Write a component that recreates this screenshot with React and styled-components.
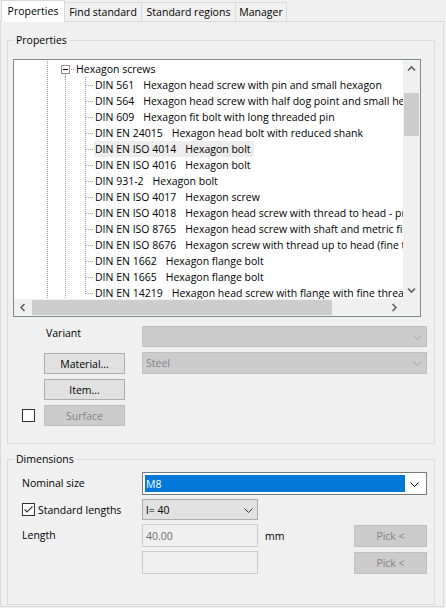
import React from 'react';
import styled, { createGlobalStyle } from 'styled-components';

const FONT = `"Open Sans", "Noto Sans", sans-serif`;
const DOT = '#a0a0a0';

const Global = createGlobalStyle`
  html, body { margin: 0; padding: 0; background: #f0f0f0; }
  body { font-family: ${FONT}; font-size: 10.5px; color: #000; }
  * { box-sizing: border-box; }
`;

const Window = styled.div`
  width: 446px;
  height: 608px;
  overflow: hidden;
  background: #f0f0f0;
  display: flex;
  flex-direction: column;
`;

const TabBar = styled.div`
  display: flex;
  align-items: flex-end;
  height: 21px;
  padding-left: 1px;
  position: relative;
  z-index: 1;
`;

const Tab = styled.div`
  flex: none;
  width: ${p => p.$w}px;
  height: ${p => (p.$active ? 22 : 19)}px;
  margin-bottom: ${p => (p.$active ? -1 : 0)}px;
  background: ${p => (p.$active ? '#ffffff' : '#f0f0f0')};
  border: 1px solid #d9d9d9;
  border-left-width: ${p => (p.$active ? 1 : 0)}px;
  border-bottom: none;
  display: flex;
  align-items: center;
  justify-content: center;
  padding-bottom: ${p => (p.$active ? 2 : 0)}px;
  white-space: nowrap;
`;

const TabPage = styled.div`
  width: 444px;
  height: 586px;
  border: 1px solid #d9d9d9;
  padding: 0 8px 0 6px;
  display: flex;
  flex-direction: column;
`;

const GroupBox = styled.fieldset`
  margin: ${p => p.$mt}px 0 0 0;
  padding: 0;
  min-width: 0;
  width: 428px;
  height: ${p => (p.$h ? `${p.$h}px` : 'auto')};
  border: 1px solid #dcdcdc;
`;

const Legend = styled.legend`
  margin-left: 6px;
  padding: 0 2px;
  line-height: 15px;
  height: 15px;
`;

const PropsBody = styled.div`
  padding: 11px 7px 17px 5px;
  display: flex;
  flex-direction: column;
`;

/* ---------- Tree ---------- */
const TreeBox = styled.div`
  width: 408px;
  height: 258px;
  border: 1px solid #828790;
  background: #fff;
  display: grid;
  grid-template-columns: 389px 17px;
  grid-template-rows: 239px 17px;
`;

const TreeContent = styled.div`
  overflow: hidden;
  padding-top: 1px;
  background: #fff;
`;

const TreeRow = styled.div`
  display: flex;
  height: 16px;
  white-space: nowrap;
`;

const GuideSvg = styled.svg`
  flex: none;
  display: block;
`;

const RowLabel = styled.span`
  display: flex;
  align-items: center;
  height: 16px;
  padding: 0 3px 0 1px;
  background: ${p => (p.$hl ? '#ededed' : 'transparent')};
`;

const Code = styled.span`
  margin-right: 9px;
`;

const VScroll = styled.div`
  background: #f0f0f0;
  display: flex;
  flex-direction: column;
`;

const HScroll = styled.div`
  background: #f0f0f0;
  display: flex;
`;

const Corner = styled.div`
  background: #f0f0f0;
`;

const ArrowBtn = styled.div`
  flex: none;
  width: 17px;
  height: 17px;
  display: flex;
  align-items: center;
  justify-content: center;
`;

const Track = styled.div`
  flex: 1;
  display: flex;
  flex-direction: ${p => (p.$v ? 'column' : 'row')};
`;

const Thumb = styled.div`
  flex: none;
  background: #cdcdcd;
  ${p =>
    p.$v
      ? `margin: ${p.$offset}px 1px 0 1px; height: ${p.$size}px;`
      : `margin: 1px 0 1px ${p.$offset}px; width: ${p.$size}px;`}
`;

/* ---------- Controls ---------- */
const ControlGrid = styled.div`
  margin-top: 9px;
  display: grid;
  grid-template-columns: 31px 81px 17px 1fr;
  grid-template-rows: 21px 22px 21px 21px;
  row-gap: 5px;
  width: 414px;
`;

const FieldLabel = styled.span`
  display: flex;
  align-items: ${p => (p.$top ? 'flex-start' : 'center')};
  line-height: 15px;
  white-space: nowrap;
  padding-left: ${p => p.$pl || 0}px;
  grid-column: ${p => p.$col || 'auto'};
`;

const Button = styled.div`
  display: flex;
  align-items: center;
  justify-content: center;
  height: ${p => p.$h || 21}px;
  align-self: end;
  grid-column: ${p => p.$col || 'auto'};
  background: ${p => (p.$disabled ? '#cccccc' : '#e1e1e1')};
  border: 1px solid ${p => (p.$disabled ? '#bfbfbf' : '#adadad')};
  color: ${p => (p.$disabled ? '#838383' : '#000')};
  white-space: nowrap;
`;

const Combo = styled.div`
  display: flex;
  align-items: center;
  height: 100%;
  grid-column: ${p => p.$col || 'auto'};
  border: 1px solid ${p => p.$border};
  background: ${p => p.$bg};
  color: ${p => p.$color || '#000'};
  padding: ${p => (p.$focused ? '2px' : '0 0 0 2px')};
`;

const ComboText = styled.span`
  flex: 1;
  align-self: stretch;
  display: flex;
  align-items: center;
  padding-left: 1px;
  background: ${p => (p.$sel ? '#0078d7' : 'transparent')};
  color: ${p => (p.$sel ? '#fff' : 'inherit')};
`;

const ComboArrow = styled.span`
  flex: none;
  width: ${p => p.$w || 18}px;
  display: flex;
  align-items: center;
  justify-content: center;
  padding-top: 1px;
`;

const CheckCell = styled.div`
  display: flex;
  align-items: center;
  padding-left: ${p => p.$pl || 0}px;
  gap: 3px;
  white-space: nowrap;
  grid-column: ${p => p.$col || 'auto'};
`;

const CheckBox = styled.span`
  flex: none;
  width: 13px;
  height: 13px;
  border: 1px solid #333;
  background: #fff;
  display: flex;
  align-items: center;
  justify-content: center;
`;

const DimBody = styled.div`
  padding: 5px 7px 0 14px;
  display: grid;
  grid-template-columns: 120px 116px 1fr 73px;
  grid-template-rows: 23px 21px 23px 23px;
  row-gap: 4px;
  width: 426px;
`;

const TextBox = styled.div`
  grid-column: ${p => p.$col || 'auto'};
  border: 1px solid #cccccc;
  background: #f0f0f0;
  color: #6d6d6d;
  display: flex;
  align-items: center;
  padding-left: 3px;
`;

const Unit = styled.span`
  display: flex;
  align-items: center;
  padding-left: 7px;
`;

/* ---------- icons ---------- */
const Chevron = ({ color = '#000' }) => (
  <svg width="9" height="5" viewBox="0 0 9 5">
    <path d="M0.5 0.5 L4.5 4.5 L8.5 0.5" fill="none" stroke={color} strokeWidth="1" />
  </svg>
);

const ScrollArrow = ({ dir }) => {
  const rot = { up: 0, down: 180, left: -90, right: 90 }[dir];
  return (
    <svg width="9" height="9" viewBox="0 0 9 9" style={{ transform: `rotate(${rot}deg)` }}>
      <path d="M1 6.5 L4.5 3 L8 6.5" fill="none" stroke="#606060" strokeWidth="1.6" />
    </svg>
  );
};

const Check = () => (
  <svg width="11" height="11" viewBox="0 0 11 11">
    <path d="M1.5 5.5 L4 8 L9.5 2.5" fill="none" stroke="#333" strokeWidth="1.1" />
  </svg>
);

const ParentGuides = () => (
  <GuideSvg width="61" height="16" viewBox="0 0 61 16" shapeRendering="crispEdges">
    <line x1="33.5" y1="0" x2="33.5" y2="16" stroke={DOT} strokeDasharray="1 1" />
    <line x1="51.5" y1="13" x2="51.5" y2="16" stroke={DOT} strokeDasharray="1 1" />
    <rect x="47.5" y="4.5" width="8" height="8" fill="#fff" stroke="#919191" />
    <line x1="49" y1="8.5" x2="54" y2="8.5" stroke="#000" />
    <line x1="57" y1="8.5" x2="61" y2="8.5" stroke={DOT} strokeDasharray="1 1" />
  </GuideSvg>
);

const ChildGuides = ({ last }) => (
  <GuideSvg width="80" height="16" viewBox="0 0 80 16" shapeRendering="crispEdges">
    <line x1="33.5" y1="0" x2="33.5" y2="16" stroke={DOT} strokeDasharray="1 1" />
    <line x1="51.5" y1="0" x2="51.5" y2="16" stroke={DOT} strokeDasharray="1 1" />
    <line x1="71.5" y1="0" x2="71.5" y2={last ? 9 : 16} stroke={DOT} strokeDasharray="1 1" />
    <line x1="72" y1="8.5" x2="80" y2="8.5" stroke={DOT} strokeDasharray="1 1" />
  </GuideSvg>
);

const items = [
  ['DIN 561', 'Hexagon head screw with pin and small hexagon'],
  ['DIN 564', 'Hexagon head screw with half dog point and small hexagon'],
  ['DIN 609', 'Hexagon fit bolt with long threaded pin'],
  ['DIN EN 24015', 'Hexagon head bolt with reduced shank'],
  ['DIN EN ISO 4014', 'Hexagon bolt'],
  ['DIN EN ISO 4016', 'Hexagon bolt'],
  ['DIN 931-2', 'Hexagon bolt'],
  ['DIN EN ISO 4017', 'Hexagon screw'],
  ['DIN EN ISO 4018', 'Hexagon head screw with thread to head - product grade C'],
  ['DIN EN ISO 8765', 'Hexagon head screw with shaft and metric fine thread'],
  ['DIN EN ISO 8676', 'Hexagon screw with thread up to head (fine thread)'],
  ['DIN EN 1662', 'Hexagon flange bolt'],
  ['DIN EN 1665', 'Hexagon flange bolt'],
  ['DIN EN 14219', 'Hexagon head screw with flange with fine thread'],
];

const tabs = [
  { label: 'Properties', w: 64, active: true },
  { label: 'Find standard', w: 77 },
  { label: 'Standard regions', w: 94 },
  { label: 'Manager', w: 51 },
];

export default function App() {
  return (
    <Window>
      <Global />
      <TabBar>
        {tabs.map(t => (
          <Tab key={t.label} $w={t.w} $active={t.active}>{t.label}</Tab>
        ))}
      </TabBar>
      <TabPage>
        <GroupBox $mt={11}>
          <Legend>Properties</Legend>
          <PropsBody>
            <TreeBox>
              <TreeContent>
                <TreeRow>
                  <ParentGuides />
                  <RowLabel>Hexagon screws</RowLabel>
                </TreeRow>
                {items.map(([code, desc], i) => (
                  <TreeRow key={code}>
                    <ChildGuides last={i === items.length - 1} />
                    <RowLabel $hl={code === 'DIN EN ISO 4014'}>
                      <Code>{code}</Code>
                      {desc}
                    </RowLabel>
                  </TreeRow>
                ))}
              </TreeContent>
              <VScroll>
                <ArrowBtn><ScrollArrow dir="up" /></ArrowBtn>
                <Track $v>
                  <Thumb $v $offset={16} $size={43} />
                </Track>
                <ArrowBtn><ScrollArrow dir="down" /></ArrowBtn>
              </VScroll>
              <HScroll>
                <ArrowBtn><ScrollArrow dir="left" /></ArrowBtn>
                <Track>
                  <Thumb $offset={1} $size={300} />
                </Track>
                <ArrowBtn><ScrollArrow dir="right" /></ArrowBtn>
              </HScroll>
              <Corner />
            </TreeBox>

            <ControlGrid>
              <FieldLabel $col="2" $pl={2} $top>Variant</FieldLabel>
              <Combo $col="4" $bg="#cccccc" $border="#bfbfbf" $color="#838383">
                <ComboText />
                <ComboArrow><Chevron color="#a6a6a6" /></ComboArrow>
              </Combo>

              <Button $col="2">Material...</Button>
              <Combo $col="4" $bg="#cccccc" $border="#bfbfbf" $color="#838383">
                <ComboText>Steel</ComboText>
                <ComboArrow><Chevron color="#a6a6a6" /></ComboArrow>
              </Combo>

              <Button $col="2">Item...</Button>
              <span />
              <span />

              <CheckCell $col="1" $pl={9}>
                <CheckBox />
              </CheckCell>
              <Button $col="2" $disabled>Surface</Button>
            </ControlGrid>
          </PropsBody>
        </GroupBox>

        <GroupBox $mt={8} $h={153}>
          <Legend>Dimensions</Legend>
          <DimBody>
            <FieldLabel>Nominal size</FieldLabel>
            <Combo $col="2 / 5" $bg="#fff" $border="#7a7a7a" $focused>
              <ComboText $sel>M8</ComboText>
              <ComboArrow $w={19}><Chevron color="#000" /></ComboArrow>
            </Combo>

            <CheckCell>
              <CheckBox><Check /></CheckBox>
              Standard lengths
            </CheckCell>
            <Combo $bg="#e1e1e1" $border="#adadad">
              <ComboText>l= 40</ComboText>
              <ComboArrow $w={17}><Chevron color="#333" /></ComboArrow>
            </Combo>
            <span />
            <span />

            <FieldLabel>Length</FieldLabel>
            <TextBox>40.00</TextBox>
            <Unit>mm</Unit>
            <Button $disabled $h={22}>Pick &lt;</Button>

            <span />
            <TextBox />
            <span />
            <Button $disabled $h={22}>Pick &lt;</Button>
          </DimBody>
        </GroupBox>
      </TabPage>
    </Window>
  );
}
